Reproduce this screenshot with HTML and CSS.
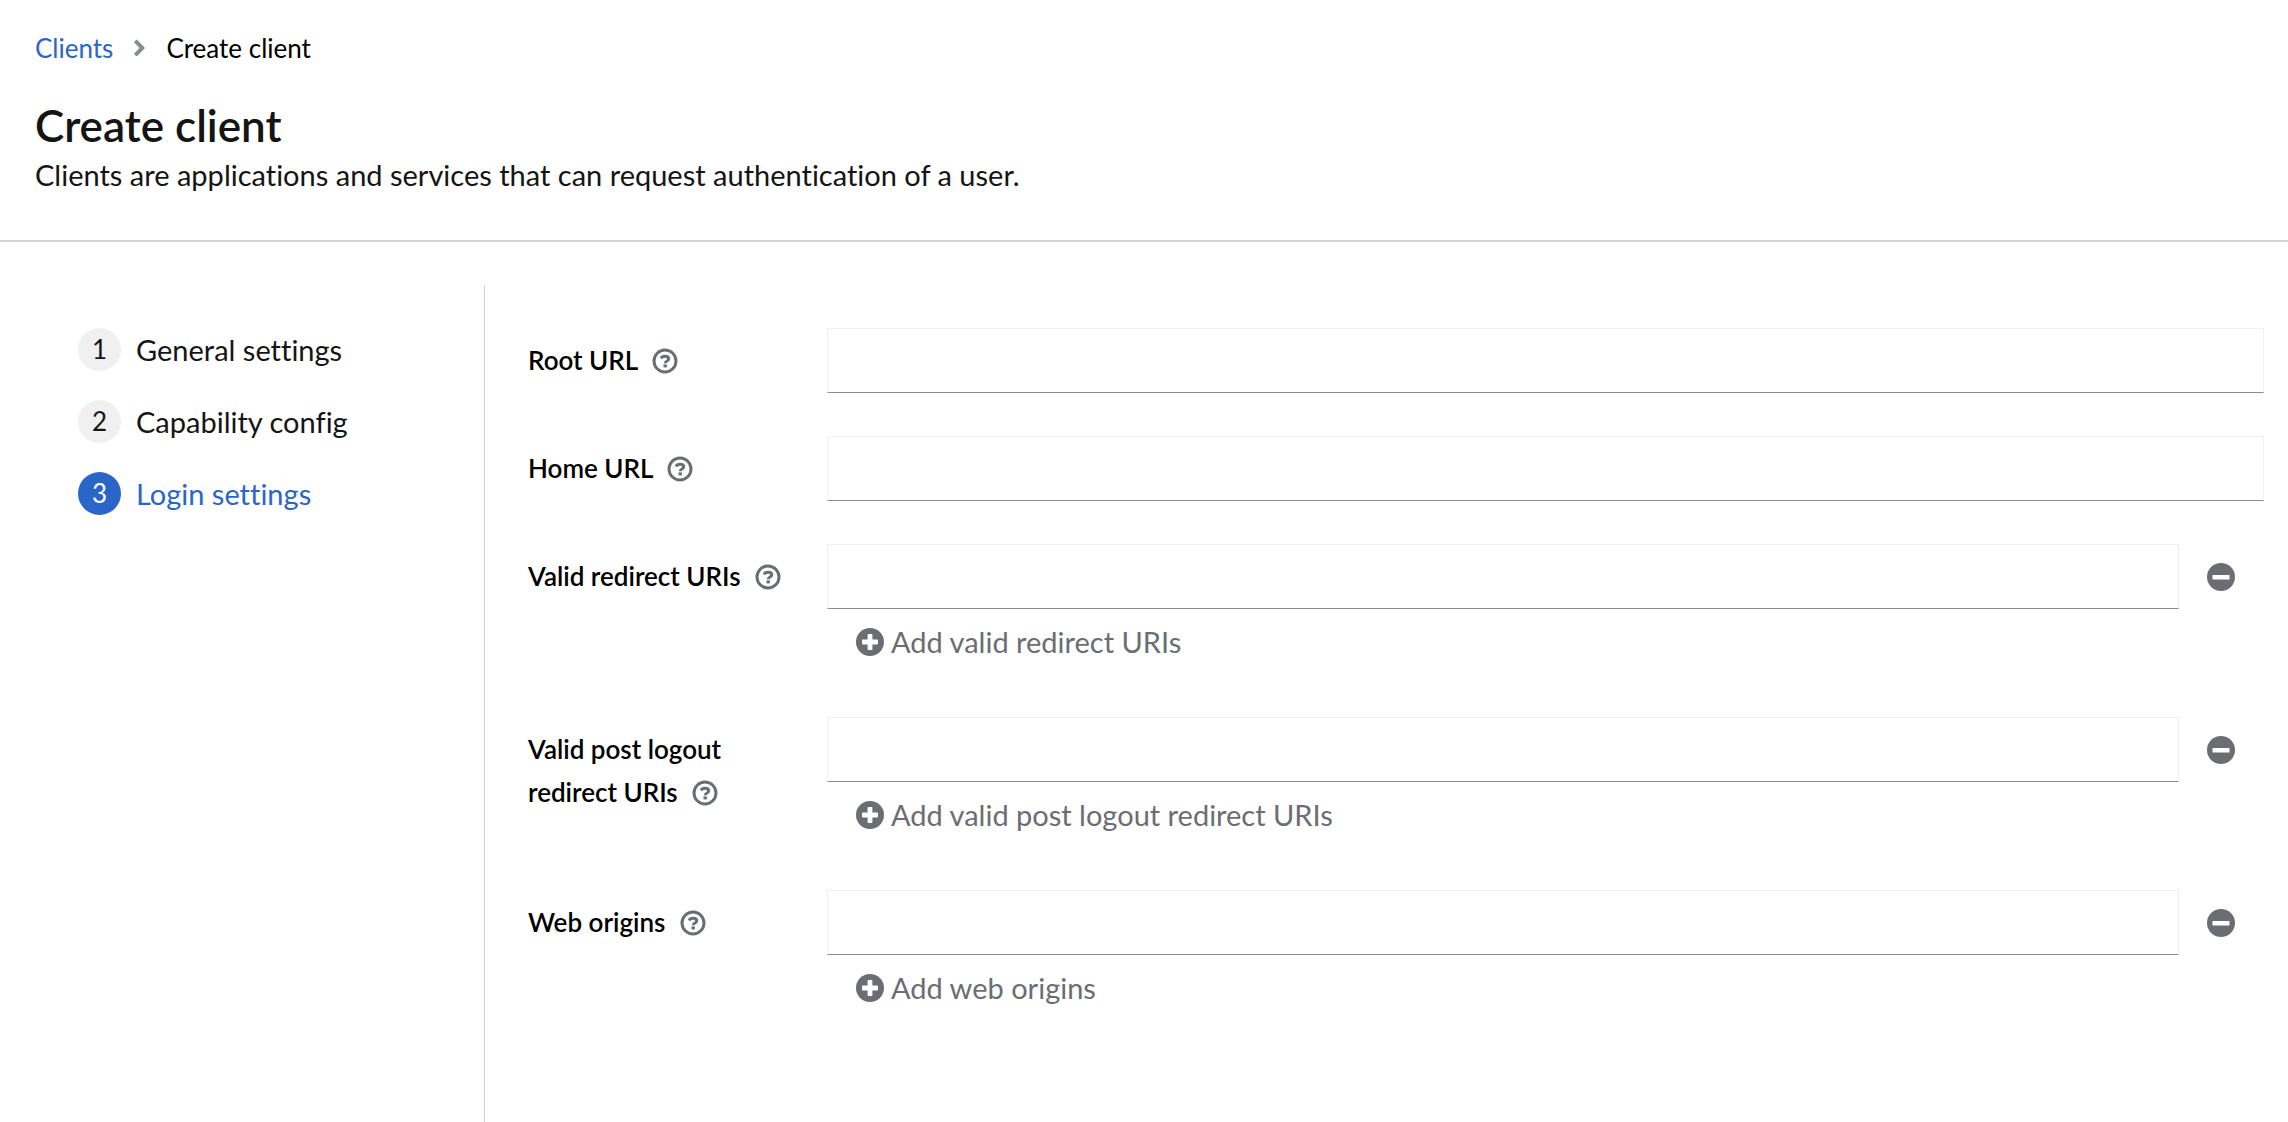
FILE: index.html
```html
<!DOCTYPE html>
<html lang="en">
<head>
  <meta charset="utf-8">
  <meta name="viewport" content="width=device-width, initial-scale=1">
  <title>Create client</title>
  <link rel="stylesheet" href="styles.css">
</head>
<body>
  <svg class="sprite" aria-hidden="true">
    <symbol id="icon-help" viewBox="0 0 26 26">
      <circle cx="13" cy="13" r="11" fill="none" stroke="currentColor" stroke-width="3"/>
      <path d="M9.200 10.600C9.800 8.900 11.300 8.300 13.100 8.300C15.200 8.300 16.700 9.300 16.700 10.900C16.700 13 13.200 12.900 13.200 15.200" fill="none" stroke="currentColor" stroke-width="3"/>
      <rect x="11.500" y="16.400" width="3.400" height="3" fill="currentColor"/>
    </symbol>
    <symbol id="icon-plus" viewBox="0 0 28 28">
      <circle cx="14" cy="14" r="14" fill="currentColor"/>
      <path d="M12.400 6h3.200a.8.8 0 0 1 .8.8v4.800h4.800a.8.8 0 0 1 .8.8v3.200a.8.8 0 0 1-.8.8h-4.800v4.800a.8.8 0 0 1-.8.8h-3.200a.8.8 0 0 1-.8-.8v-4.800H6.800a.8.8 0 0 1-.8-.8v-3.200a.8.8 0 0 1 .8-.8h4.800V6.800a.8.8 0 0 1 .8-.8z" fill="#fff"/>
    </symbol>
    <symbol id="icon-minus" viewBox="0 0 28 28">
      <circle cx="14" cy="14" r="14" fill="currentColor"/>
      <rect x="5.500" y="12" width="17" height="4.500" rx=".5" fill="#fff"/>
    </symbol>
  </svg>

  <header class="page-header">
    <nav aria-label="Breadcrumb">
      <ol class="breadcrumb">
        <li><a class="breadcrumb-link" href="#clients">Clients</a></li>
        <li class="breadcrumb-item" aria-current="page">
          <svg class="breadcrumb-divider" viewBox="0 0 256 512" aria-hidden="true"><path fill="currentColor" d="M224.3 273l-136 136c-9.400 9.400-24.600 9.400-33.900 0l-22.600-22.600c-9.400-9.400-9.400-24.600 0-33.900l96.400-96.400-96.400-96.400c-9.400-9.400-9.400-24.600 0-33.900L54.300 103c9.400-9.400 24.600-9.400 33.900 0l136 136c9.500 9.400 9.500 24.600.1 34z"/></svg>
          Create client
        </li>
      </ol>
    </nav>
    <h1 class="page-title">Create client</h1>
    <p class="page-description">Clients are applications and services that can request authentication of a user.</p>
  </header>

  <div class="wizard">
    <nav class="wizard-nav" aria-label="Steps">
      <ol class="steps">
        <li><button class="step" type="button"><span class="step-number">1</span>General settings</button></li>
        <li><button class="step" type="button"><span class="step-number">2</span>Capability config</button></li>
        <li><button class="step step-current" type="button" aria-current="step"><span class="step-number">3</span>Login settings</button></li>
      </ol>
    </nav>

    <main class="wizard-main">
      <form class="form">
        <div class="field">
          <div class="field-label">
            <label for="root-url">Root URL</label>
            <button class="help" type="button" aria-label="Help for Root URL"><svg class="help-icon"><use href="#icon-help"/></svg></button>
          </div>
          <input class="text-input" id="root-url" type="text">
        </div>

        <div class="field">
          <div class="field-label">
            <label for="home-url">Home URL</label>
            <button class="help" type="button" aria-label="Help for Home URL"><svg class="help-icon"><use href="#icon-help"/></svg></button>
          </div>
          <input class="text-input" id="home-url" type="text">
        </div>

        <div class="field">
          <div class="field-label">
            <label for="redirect-uris">Valid redirect URIs</label>
            <button class="help" type="button" aria-label="Help for Valid redirect URIs"><svg class="help-icon"><use href="#icon-help"/></svg></button>
          </div>
          <div>
            <div class="input-group">
              <input class="text-input" id="redirect-uris" type="text">
              <button class="remove" type="button" aria-label="Remove"><svg class="action-icon"><use href="#icon-minus"/></svg></button>
            </div>
            <button class="add" type="button"><svg class="action-icon" aria-hidden="true"><use href="#icon-plus"/></svg>Add valid redirect URIs</button>
          </div>
        </div>

        <div class="field">
          <div class="field-label">
            <label for="logout-uris">Valid post logout redirect URIs</label>
            <button class="help" type="button" aria-label="Help for Valid post logout redirect URIs"><svg class="help-icon"><use href="#icon-help"/></svg></button>
          </div>
          <div>
            <div class="input-group">
              <input class="text-input" id="logout-uris" type="text">
              <button class="remove" type="button" aria-label="Remove"><svg class="action-icon"><use href="#icon-minus"/></svg></button>
            </div>
            <button class="add" type="button"><svg class="action-icon" aria-hidden="true"><use href="#icon-plus"/></svg>Add valid post logout redirect URIs</button>
          </div>
        </div>

        <div class="field">
          <div class="field-label">
            <label for="web-origins">Web origins</label>
            <button class="help" type="button" aria-label="Help for Web origins"><svg class="help-icon"><use href="#icon-help"/></svg></button>
          </div>
          <div>
            <div class="input-group">
              <input class="text-input" id="web-origins" type="text">
              <button class="remove" type="button" aria-label="Remove"><svg class="action-icon"><use href="#icon-minus"/></svg></button>
            </div>
            <button class="add" type="button"><svg class="action-icon" aria-hidden="true"><use href="#icon-plus"/></svg>Add web origins</button>
          </div>
        </div>
      </form>
    </main>
  </div>
</body>
</html>
```
FILE: styles.css
```css
:root {
  --text: #151515;
  --link: #2a66c8;
  --muted: #6a6e73;
  --border: #d2d2d2;
  --subtle: #f0f0f0;
}

* {
  box-sizing: border-box;
}

body {
  display: flex;
  flex-direction: column;
  min-height: 100vh;
  margin: 0;
  background: #fff;
  color: var(--text);
  font-family: Lato, "Open Sans", sans-serif;
  font-size: 29px;
  font-variant-ligatures: none;
  line-height: 43px;
}

button,
input {
  font: inherit;
  font-variant-ligatures: none;
  color: inherit;
}

button {
  padding: 0;
  border: 0;
  background: none;
  cursor: pointer;
}

svg {
  display: block;
  flex: none;
}

.sprite {
  position: absolute;
  width: 0;
  height: 0;
}

/* Page header */

.page-header {
  padding: 28px 35px 44px;
  border-bottom: 2px solid var(--border);
}

.breadcrumb {
  display: flex;
  gap: 20px;
  margin: 0;
  padding: 0;
  list-style: none;
  color: #000;
  font-size: 26px;
  line-height: 40px;
}

.breadcrumb-item {
  display: flex;
  align-items: center;
  gap: 20px;
}

.breadcrumb-link {
  color: var(--link);
  text-decoration: none;
}

.breadcrumb-divider {
  width: 13px;
  height: 26px;
  color: #8a8d90;
}

.page-title {
  margin: 29px 0 0;
  font-size: 44px;
  font-weight: 600;
  line-height: 56px;
}

.page-description {
  margin: 0;
}

/* Wizard */

.wizard {
  display: flex;
  flex: 1;
  padding-top: 43px;
}

.wizard-nav {
  flex: none;
  width: 485px;
  padding: 43px 43px 43px 78px;
  border-right: 1px solid var(--border);
}

.steps {
  display: grid;
  gap: 29px;
  margin: 0;
  padding: 0;
  list-style: none;
}

.step {
  display: flex;
  align-items: center;
  gap: 15px;
  text-align: left;
}

.step-number {
  width: 43px;
  height: 43px;
  border-radius: 50%;
  background: var(--subtle);
  font-size: 26px;
  text-align: center;
}

.step-current {
  color: var(--link);
}

.step-current .step-number {
  background: var(--link);
  color: #fff;
}

.wizard-main {
  flex: 1;
  padding: 43px 24px 43px 43px;
}

/* Form */

.form {
  display: grid;
  gap: 43px;
}

.field {
  display: grid;
  grid-template-columns: 270px 1fr;
  gap: 29px;
  align-items: start;
}

.field-label {
  padding-top: 11px;
  color: #000;
  font-size: 26px;
  font-weight: 600;
}

.help {
  margin-left: 8px;
  color: var(--muted);
  vertical-align: -4px;
}

.help-icon {
  width: 26px;
  height: 26px;
}

.text-input {
  width: 100%;
  height: 65px;
  padding: 0 14px;
  border: 1px solid var(--subtle);
  border-bottom-color: #8a8d90;
  border-radius: 0;
  background: #fff;
  outline: 0;
}

.input-group {
  display: flex;
}

.remove {
  display: flex;
  flex: none;
  align-items: center;
  padding: 0 29px 0 28px;
  color: var(--muted);
}

.add {
  display: flex;
  align-items: center;
  gap: 7px;
  height: 65px;
  padding: 0 29px;
  color: var(--muted);
}

.action-icon {
  width: 28px;
  height: 28px;
}
```
